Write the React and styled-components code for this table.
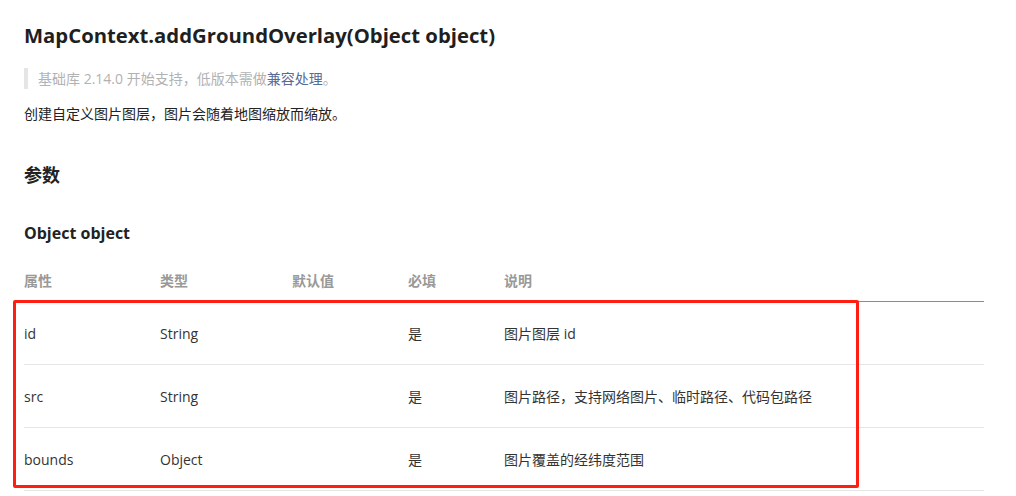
import React from "react";
import styled, { createGlobalStyle } from "styled-components";

const Global = createGlobalStyle`
  html, body { margin: 0; padding: 0; background: #fff; }
  body {
    font-family: "Open Sans", "Noto Sans CJK SC", sans-serif;
    font-size: 14px;
    color: #333;
  }
`;

const Page = styled.div`
  position: relative;
  padding: 20px 32px 0 24px;
  width: 1016px;
  box-sizing: border-box;
`;

const Title = styled.h1`
  margin: 0;
  font-size: 20.3px;
  line-height: 30px;
  font-weight: 700;
  color: #1f1f1f;
`;

const Quote = styled.blockquote`
  margin: 18px 0 0;
  padding: 0 0 0 10px;
  border-left: 4px solid #e5e5e5;
  line-height: 21px;
  color: #b2b2b2;
`;

const Link = styled.span`
  color: #576b95;
`;

const Para = styled.p`
  margin: 14px 0 0;
  line-height: 22px;
  color: #222;
`;

const H2 = styled.h2`
  margin: 37px 0 0;
  font-size: 18px;
  line-height: 26px;
  font-weight: 700;
  color: #222;
`;

const H3 = styled.h3`
  margin: 33px 0 0;
  font-size: 16px;
  line-height: 24px;
  font-weight: 700;
  color: #222;
`;

const Table = styled.div`
  margin-top: 14px;
  width: 960px;
`;

const Row = styled.div`
  display: grid;
  grid-template-columns: 136px 132px 116px 96px 1fr;
  height: ${(p) => (p.$head ? "42px" : "62px")};
  align-items: center;
  border-bottom: 1px solid ${(p) => (p.$head ? "#8c8c8c" : "#e5e5e5")};
`;

const Cell = styled.div`
  color: ${(p) => (p.$head ? "#999" : "#333")};
  font-weight: ${(p) => (p.$head ? 700 : 400)};
  white-space: nowrap;
  padding-bottom: ${(p) => (p.$head ? "1px" : "0")};
`;

const Highlight = styled.div`
  position: absolute;
  left: 13px;
  top: 300px;
  width: 846px;
  height: 188px;
  border: 3px solid #ff1f12;
  border-radius: 2px;
  box-sizing: border-box;
  pointer-events: none;
`;

const head = ["属性", "类型", "默认值", "必填", "说明"];
const rows = [
  ["id", "String", "", "是", "图片图层 id"],
  ["src", "String", "", "是", "图片路径，支持网络图片、临时路径、代码包路径"],
  ["bounds", "Object", "", "是", "图片覆盖的经纬度范围"],
];

export default function App() {
  return (
    <>
      <Global />
      <Page>
        <Title>MapContext.addGroundOverlay(Object object)</Title>
        <Quote>
          基础库 2.14.0 开始支持，低版本需做<Link>兼容处理</Link>。
        </Quote>
        <Para>创建自定义图片图层，图片会随着地图缩放而缩放。</Para>
        <H2>参数</H2>
        <H3>Object object</H3>
        <Table>
          <Row $head>
            {head.map((h) => (
              <Cell $head key={h}>{h}</Cell>
            ))}
          </Row>
          {rows.map((r) => (
            <Row key={r[0]}>
              {r.map((c, i) => (
                <Cell key={i}>{c}</Cell>
              ))}
            </Row>
          ))}
        </Table>
        <Highlight />
      </Page>
    </>
  );
}
